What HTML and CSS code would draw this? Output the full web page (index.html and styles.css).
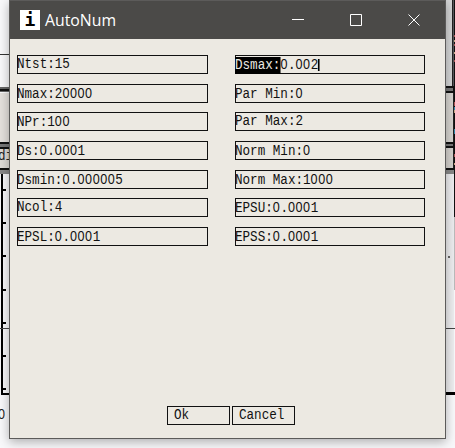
FILE: index.html
```html
<!DOCTYPE html>
<html lang="en">
<head>
<meta charset="utf-8">
<title>AutoNum</title>
<link rel="stylesheet" href="styles.css">
</head>
<body>
<svg class="backdrop" width="455" height="448" viewBox="0 0 455 448" shape-rendering="crispEdges" aria-hidden="true">
  <rect width="455" height="448" fill="#f8f8fa"/>
  <rect y="54" width="10" height="1" fill="#333"/>
  <rect y="87" width="10" height="5" fill="#666"/>
  <rect y="89" width="10" height="2" fill="#111"/>
  <rect y="93" width="10" height="50" fill="#e4e0dc"/>
  <rect y="142" width="10" height="7" fill="#111"/>
  <rect y="144" width="10" height="3" fill="#777"/>
  <rect y="149" width="10" height="20" fill="#dedbd7"/>
  <rect y="168" width="10" height="2" fill="#111"/>
  <rect y="170" width="10" height="4" fill="#888"/>
  <path d="M2 174V394H10" fill="none" stroke="#000" stroke-width="2"/>
  <path d="M2 190h4M2 223h4M2 256h4M2 290h4M2 323h4M2 356h4M2 389h4" stroke="#000" stroke-width="2"/>
  <rect y="328" width="10" height="1" fill="#444"/>
  <rect x="445" width="10" height="87" fill="#d4d5d6"/>
  <rect x="452" width="1" height="87" fill="#222"/>
  <rect x="453" width="2" height="92" fill="#55565a"/>
  <rect x="454" width="1" height="217" fill="#111"/>
  <rect x="445" y="86" width="9" height="7" fill="#111"/>
  <rect x="445" y="88" width="8" height="3" fill="#777"/>
  <rect x="445" y="93" width="8" height="49" fill="#d6d3cf"/>
  <rect x="453" y="93" width="1" height="77" fill="#222"/>
  <rect x="445" y="142" width="9" height="6" fill="#111"/>
  <rect x="445" y="144" width="8" height="2" fill="#777"/>
  <rect x="445" y="148" width="8" height="20" fill="#d4d1cd"/>
  <rect x="445" y="168" width="9" height="2" fill="#111"/>
  <rect x="445" y="170" width="9" height="4" fill="#888"/>
  <rect x="445" y="174" width="9" height="218" fill="#ededef"/>
  <rect x="454" y="217" width="1" height="73" fill="#bbb"/>
  <path d="M454.500 35v2M454.500 44v2M454.500 60v2M454.500 102v4M454.500 154v3" stroke="#a55"/>
  <path d="M454.500 40v2M454.500 52v2M454.500 110v3M454.500 163v2" stroke="#ca8"/>
  <path d="M454.500 107v3M454.500 129v5" stroke="#38a"/>
  <rect x="448" y="256" width="2" height="2" fill="#666"/>
  <rect x="445" y="328" width="10" height="1" fill="#444"/>
  <rect x="445" y="392" width="10" height="3" fill="#000"/>
</svg>
<span class="behind behind-label">di</span>
<span class="behind behind-tick">0</span>

<main class="dialog">
  <header class="titlebar">
    <span class="app-icon">i</span>
    <h1 class="title">AutoNum</h1>
    <div class="controls">
      <svg width="12" height="12" viewBox="0 0 12 12"><path d="M0 5.500H12"/></svg>
      <svg width="12" height="12" viewBox="0 0 12 12"><path d="M.5.500H11.500V11.500H.5Z"/></svg>
      <svg width="12" height="12" viewBox="0 0 12 12"><path d="M.5.500L11.500 11.500M11.500.500L.5 11.500"/></svg>
    </div>
  </header>
  <section class="fields">
    <div class="field"><span class="text">Ntst:15</span></div>
    <div class="field"><span class="text"><span class="selected">Dsmax:</span><span class="zero">0</span>.<span class="zero">00</span>2<span class="caret"></span></span></div>
    <div class="field"><span class="text">Nmax:2<span class="zero">0000</span></span></div>
    <div class="field"><span class="text">Par Min:<span class="zero">0</span></span></div>
    <div class="field"><span class="text">NPr:1<span class="zero">00</span></span></div>
    <div class="field"><span class="text">Par Max:2</span></div>
    <div class="field"><span class="text">Ds:<span class="zero">0</span>.<span class="zero">000</span>1</span></div>
    <div class="field"><span class="text">Norm Min:<span class="zero">0</span></span></div>
    <div class="field"><span class="text">Dsmin:<span class="zero">0</span>.<span class="zero">00000</span>5</span></div>
    <div class="field"><span class="text">Norm Max:1<span class="zero">000</span></span></div>
    <div class="field"><span class="text">Ncol:4</span></div>
    <div class="field"><span class="text">EPSU:<span class="zero">0</span>.<span class="zero">000</span>1</span></div>
    <div class="field"><span class="text">EPSL:<span class="zero">0</span>.<span class="zero">000</span>1</span></div>
    <div class="field"><span class="text">EPSS:<span class="zero">0</span>.<span class="zero">000</span>1</span></div>
  </section>
  <footer class="buttons">
    <div class="button"><span class="text">Ok</span></div>
    <div class="button"><span class="text">Cancel</span></div>
  </footer>
</main>
</body>
</html>
```

FILE: styles.css
```css
* { box-sizing: border-box; }

body {
  margin: 0;
  width: 455px;
  height: 448px;
  overflow: hidden;
  position: relative;
  background: #f8f8fa;
}

.backdrop {
  position: absolute;
  left: 0;
  top: 0;
}

.behind {
  position: absolute;
  font: 15px/18px "Liberation Mono", monospace;
  color: #222;
  transform: scaleX(.84);
  transform-origin: left;
}

.behind-label { left: -2px; top: 148px; }
.behind-tick { left: -2px; top: 405px; font-family: "Liberation Sans", sans-serif; }

.dialog {
  position: relative;
  width: 437px;
  height: 439px;
  margin-left: 9px;
  border: 1px solid #5c5b5a;
  background: #ece9e2;
  box-shadow: 0 3px 10px rgba(0, 0, 0, .3);
  display: flex;
  flex-direction: column;
}

.titlebar {
  height: 38px;
  flex: none;
  display: flex;
  align-items: center;
  padding: 0 25px 0 10px;
  background: #4b4a48;
  color: #fff;
}

.app-icon {
  width: 20px;
  height: 20px;
  background: #fff;
  color: #000;
  font: bold 18px/19px "DejaVu Sans Mono", monospace;
  text-align: center;
}

.title {
  margin: 0 0 0 5px;
  font: 400 15.8px/20px "Open Sans", sans-serif;
}

.controls {
  margin-left: auto;
  display: flex;
  gap: 46px;
}

.controls svg {
  display: block;
  fill: none;
  stroke: #fff;
}

.fields {
  display: grid;
  grid-template-columns: 191px 190px;
  grid-auto-rows: 19px;
  gap: 9.7px 27px;
  padding: 16px 0 0 7px;
}

.field,
.button {
  height: 19px;
  border: 1px solid #111;
  white-space: pre;
}

.text {
  display: block;
  width: max-content;
  color: #111;
  font: 15.500px/17px "Liberation Mono", monospace;
  transform: scaleX(.813);
  transform-origin: left;
}

.field .text { margin-left: -.7px; }

.zero {
  font-family: "Liberation Sans", sans-serif;
  letter-spacing: .044em;
  line-height: 1;
}

.selected {
  display: inline-block;
  height: 17px;
  background: #000;
  color: #ece9e2;
}

.caret {
  display: inline-block;
  width: 2px;
  height: 12px;
  background: #000;
  vertical-align: -2px;
}

.buttons {
  display: flex;
  gap: 2px;
  margin: auto 0 13px 157px;
}

.button {
  width: 63px;
  padding-left: 6px;
}
```
